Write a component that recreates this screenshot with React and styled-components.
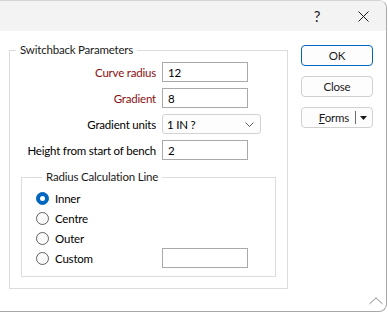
import styled, { createGlobalStyle } from "styled-components"

const GlobalStyle = createGlobalStyle`
  body {
    margin: 0;
    background: #ffffff;
    font-family: Lato, "Liberation Sans", sans-serif;
    font-size: 11.5px;
    letter-spacing: -0.2px;
    color: #000;
  }
`

const Window = styled.div`
  position: relative;
  width: 387px;
  height: 312px;
  box-sizing: border-box;
  border-top: 1px solid #d4d4d4;
  border-right: 1px solid #a8a8a8;
  border-bottom: 1px solid #a8a8a8;
  border-radius: 0 8px 8px 0;
  overflow: hidden;
  background: #ffffff;
  display: flex;
  flex-direction: column;
`

const TitleBar = styled.div`
  height: 30px;
  flex: none;
  background: #f3f3f3;
  display: flex;
  justify-content: flex-end;
  align-items: center;
`

const Caption = styled.div`
  width: 46px;
  height: 30px;
  display: flex;
  align-items: center;
  justify-content: center;
  font-size: 15px;
  color: #1a1a1a;
`

const Body = styled.div`
  display: flex;
  align-items: flex-start;
  padding: 11px 0 0 9px;
`

const Group = styled.fieldset`
  margin: ${p => p.$inner ? "9px 0 0 11px" : "0"};
  padding: ${p => p.$inner ? "3px 0 8px 14px" : "4px 0 11px 0"};
  width: ${p => p.$inner ? "255px" : "279px"};
  box-sizing: border-box;
  min-width: 0;
  border: 1px solid #dcdcdc;
`

const Legend = styled.legend`
  margin-left: 6px;
  padding: 0 4px;
  line-height: 16px;
  color: #1a1a1a;
`

const FormGrid = styled.div`
  display: grid;
  grid-template-columns: 146px auto;
  column-gap: 6px;
  row-gap: 6px;
  align-items: center;
`

const Label = styled.div`
  text-align: right;
  color: ${p => p.$required ? "#8a0f0f" : "#000"};
  white-space: nowrap;
`

const TextBox = styled.div`
  width: 86px;
  height: 20px;
  box-sizing: border-box;
  border: 1px solid #a9a9a9;
  padding-left: 5px;
  display: flex;
  align-items: center;
  background: #fff;
`

const Combo = styled.div`
  width: 99px;
  height: 20px;
  box-sizing: border-box;
  border: 1px solid #d3d3d3;
  border-radius: 3px;
  background: #fdfdfd;
  padding: 0 6px 0 4px;
  display: flex;
  align-items: center;
  justify-content: space-between;
`

const RadioGrid = styled.div`
  display: grid;
  grid-template-columns: 126px 86px;
  grid-auto-rows: 20px;
  align-items: center;
`

const RadioLabel = styled.div`
  display: flex;
  align-items: center;
  gap: 6px;
`

const RadioDot = styled.span`
  width: 13px;
  height: 13px;
  box-sizing: border-box;
  border-radius: 50%;
  border: 1px solid ${p => p.$checked ? "#0067c0" : "#616161"};
  background: ${p => p.$checked ? "#0067c0" : "#fafafa"};
  display: flex;
  align-items: center;
  justify-content: center;
  &::after {
    content: "";
    display: ${p => p.$checked ? "block" : "none"};
    width: 5px;
    height: 5px;
    border-radius: 50%;
    background: #fff;
  }
`

const ButtonColumn = styled.div`
  margin: 3px 0 0 13px;
  width: 72px;
  display: flex;
  flex-direction: column;
  gap: 10px;
`

const Button = styled.div`
  height: 21px;
  box-sizing: border-box;
  border: 1px solid ${p => p.$primary ? "#0067c0" : "#d0d0d0"};
  border-radius: 4px;
  background: #fdfdfd;
  display: flex;
  align-items: center;
  justify-content: ${p => p.$split ? "flex-end" : "center"};
  padding-right: ${p => p.$split ? "5px" : "0"};
  color: #1a1a1a;
`

const Divider = styled.span`
  width: 1px;
  height: 13px;
  background: #6d6d6d;
  margin: 0 4px 0 6px;
`

const Grip = styled.svg`
  position: absolute;
  right: 3px;
  bottom: 6px;
`

const fields = [
  { label: "Curve radius", value: "12", required: true },
  { label: "Gradient", value: "8", required: true },
  { label: "Gradient units", value: "1 IN ?", combo: true },
  { label: "Height from start of bench", value: "2" },
]

const radios = ["Inner", "Centre", "Outer", "Custom"]

export default function App() {
  return (
    <>
      <GlobalStyle />
      <Window>
        <TitleBar>
          <Caption>?</Caption>
          <Caption>
            <svg width="11" height="11" viewBox="0 0 11 11">
              <path d="M0.5 0.5 L10.5 10.5 M10.5 0.5 L0.5 10.5" stroke="#1a1a1a" strokeWidth="1" />
            </svg>
          </Caption>
        </TitleBar>
        <Body>
          <Group>
            <Legend>Switchback Parameters</Legend>
            <FormGrid>
              {fields.map(f => (
                <>
                  <Label key={f.label} $required={f.required}>{f.label}</Label>
                  {f.combo ? (
                    <Combo>
                      <span>{f.value}</span>
                      <svg width="9" height="5" viewBox="0 0 9 5">
                        <path d="M0.5 0.5 L4.5 4.5 L8.5 0.5" fill="none" stroke="#606060" strokeWidth="1" />
                      </svg>
                    </Combo>
                  ) : (
                    <TextBox>{f.value}</TextBox>
                  )}
                </>
              ))}
            </FormGrid>
            <Group $inner>
              <Legend>Radius Calculation Line</Legend>
              <RadioGrid>
                {radios.map((r, i) => (
                  <>
                    <RadioLabel key={r}>
                      <RadioDot $checked={i === 0} />
                      {r}
                    </RadioLabel>
                    {r === "Custom" ? <TextBox /> : <span />}
                  </>
                ))}
              </RadioGrid>
            </Group>
          </Group>
          <ButtonColumn>
            <Button $primary>OK</Button>
            <Button>Close</Button>
            <Button $split>
              <span><u>F</u>orms</span>
              <Divider />
              <svg width="7" height="4" viewBox="0 0 7 4">
                <path d="M0 0 L7 0 L3.5 4 Z" fill="#1a1a1a" />
              </svg>
            </Button>
          </ButtonColumn>
        </Body>
        <Grip width="14" height="8" viewBox="0 0 14 8">
          <path d="M0.5 7 L7 0.8 L13.5 7" fill="none" stroke="#8a8a8a" strokeWidth="1" />
        </Grip>
      </Window>
    </>
  )
}
